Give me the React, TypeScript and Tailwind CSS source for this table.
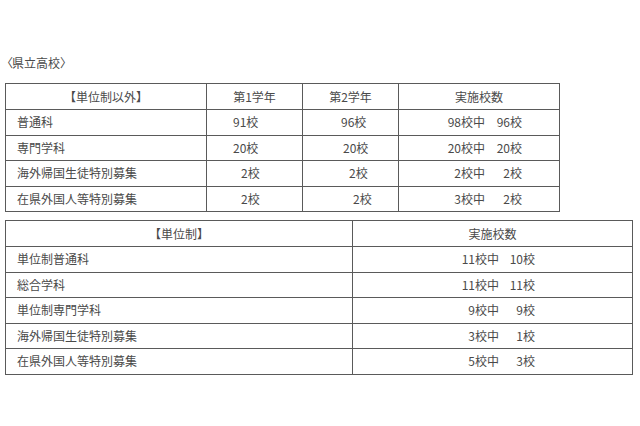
import React from "react";

const font = { fontFamily: '"Noto Sans CJK JP", "Noto Sans", sans-serif' };

type Row1 = { name: string; y1: string; p1: string; y2: string; p2: string; total: string; done: string };

const rows1: Row1[] = [
  { name: "普通科", y1: "91校", p1: "pl-[26px]", y2: "96校", p2: "pl-[38px]", total: "98校中", done: "96校" },
  { name: "専門学科", y1: "20校", p1: "pl-[26px]", y2: "20校", p2: "pl-[40px]", total: "20校中", done: "20校" },
  { name: "海外帰国生徒特別募集", y1: "2校", p1: "pl-[34px]", y2: "2校", p2: "pl-[46px]", total: "2校中", done: "2校" },
  { name: "在県外国人等特別募集", y1: "2校", p1: "pl-[34px]", y2: "2校", p2: "pl-[50px]", total: "3校中", done: "2校" },
];

const rows2 = [
  { name: "単位制普通科", total: "11校中", done: "10校" },
  { name: "総合学科", total: "11校中", done: "11校" },
  { name: "単位制専門学科", total: "9校中", done: "9校" },
  { name: "海外帰国生徒特別募集", total: "3校中", done: "1校" },
  { name: "在県外国人等特別募集", total: "5校中", done: "3校" },
];

const cell = "border border-[#5a5a5a] p-0 align-middle";

export default function App() {
  return (
    <div className="w-[640px] h-[426px] bg-white text-[#4a4a4a] text-[12px] leading-none overflow-hidden" style={font}>
      <div className="pt-[57px] pl-[6px] h-[83px]">
        <span className="-ml-[5px]">〈</span>
        <span className="-ml-[1px]">県立高校</span>
        <span className="-mr-[5px]">〉</span>
      </div>

      {/* 単位制以外 */}
      <table className="ml-[5px] border-collapse table-fixed w-[554px]">
        <colgroup>
          <col className="w-[201px]" />
          <col className="w-[96px]" />
          <col className="w-[96px]" />
          <col className="w-[161px]" />
        </colgroup>
        <tbody>
          <tr className="h-[26px]">
            <td className={`${cell} text-center`}>【単位制以外】</td>
            <td className={`${cell} text-center`}>第1学年</td>
            <td className={`${cell} text-center`}>第2学年</td>
            <td className={`${cell} text-center`}>実施校数</td>
          </tr>
          {rows1.map((r) => (
            <tr key={r.name} className="h-[25.5px]">
              <td className={`${cell} pl-[11px]`}>{r.name}</td>
              <td className={`${cell} ${r.p1}`}>{r.y1}</td>
              <td className={`${cell} ${r.p2}`}>{r.y2}</td>
              <td className={cell}>
                <div className="flex">
                  <span className="w-[86px] text-right">{r.total}</span>
                  <span className="w-[37px] text-right">{r.done}</span>
                </div>
              </td>
            </tr>
          ))}
        </tbody>
      </table>

      {/* 単位制 */}
      <table className="ml-[5px] mt-[8px] border-collapse table-fixed w-[627px]">
        <colgroup>
          <col className="w-[347px]" />
          <col className="w-[280px]" />
        </colgroup>
        <tbody>
          <tr className="h-[26px]">
            <td className={`${cell} text-center`}>【単位制】</td>
            <td className={`${cell} text-center`}>実施校数</td>
          </tr>
          {rows2.map((r) => (
            <tr key={r.name} className="h-[25.5px]">
              <td className={`${cell} pl-[11px]`}>{r.name}</td>
              <td className={cell}>
                <div className="flex">
                  <span className="w-[146px] text-right">{r.total}</span>
                  <span className="w-[36px] text-right">{r.done}</span>
                </div>
              </td>
            </tr>
          ))}
        </tbody>
      </table>
    </div>
  );
}
